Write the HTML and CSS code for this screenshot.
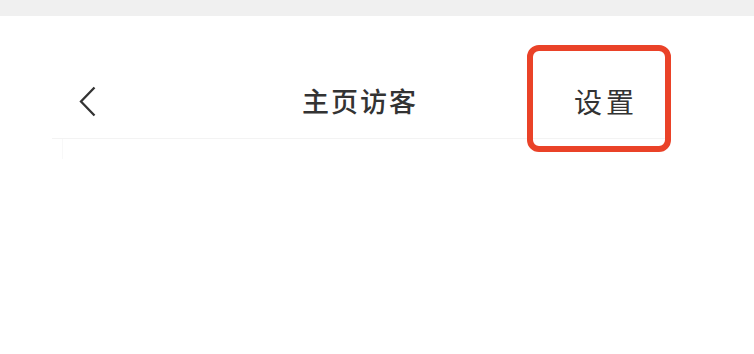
FILE: index.html
```html
<!DOCTYPE html>
<html lang="zh-CN">
<head>
<meta charset="utf-8">
<title>主页访客</title>
<link rel="stylesheet" href="styles.css">
</head>
<body>
<div class="statusbar"></div>
<header class="nav">
  <span class="back" aria-label="返回">
    <svg width="17" height="31" viewBox="0 0 17 31"><polyline points="15.5,1.5 2,15.5 15.5,29.5" fill="none" stroke="#333" stroke-width="2.3" stroke-linejoin="miter"/></svg>
  </span>
  <h1 class="title">主页访客</h1>
  <span class="action">设置</span>
</header>
<div class="content"><span class="tick"></span></div>
<div class="highlight"></div>
</body>
</html>
```

FILE: styles.css
```css
html, body {
  margin: 0;
  padding: 0;
  background: #ffffff;
  font-family: "Noto Sans CJK SC", "Noto Sans", sans-serif;
  color: #333333;
}
.statusbar {
  height: 16px;
  background: #f0f0f0;
}
.nav {
  box-sizing: border-box;
  height: 123px;
  margin: 0 52px;
  padding-top: 48px;
  display: flex;
  align-items: center;
  border-bottom: 1px solid #f3f3f3;
  width: 618px;
}
.back {
  display: flex;
  margin-left: 27px;
  width: 17px;
  height: 31px;
}
.title {
  margin: 0 0 0 206px;
  font-size: 27px;
  font-weight: 500;
  letter-spacing: 2px;
  line-height: 30px;
}
.action {
  margin-left: 156px;
  font-size: 28px;
  letter-spacing: 4px;
  line-height: 30px;
}
.content {
  margin: 0 52px;
  height: 200px;
}
.tick {
  display: block;
  margin-left: 10px;
  width: 1px;
  height: 20px;
  background: #f8f8f8;
}
.highlight {
  position: absolute;
  left: 527px;
  top: 45px;
  width: 132px;
  height: 95px;
  border: 6px solid #ea4228;
  border-radius: 12px;
}
```
